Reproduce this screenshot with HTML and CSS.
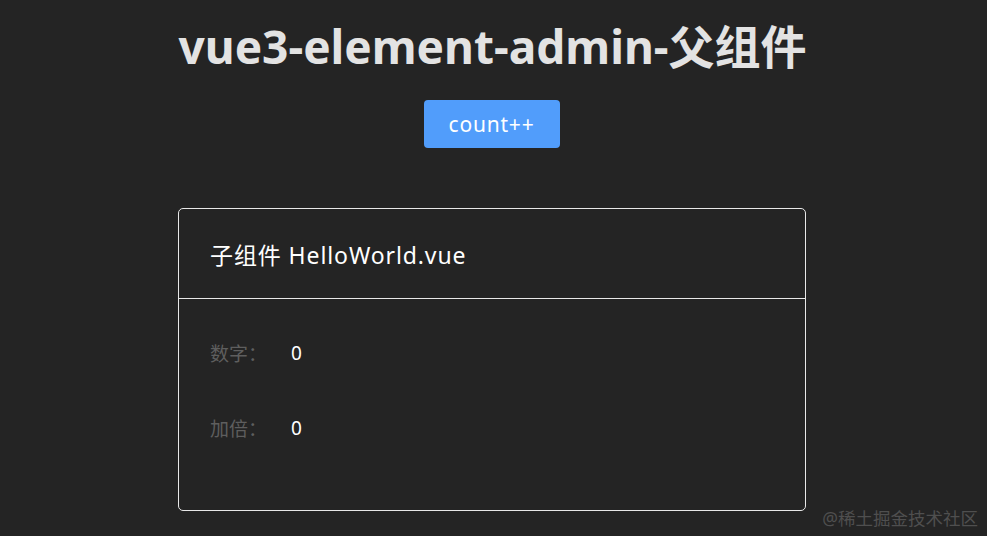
FILE: index.html
```html
<!DOCTYPE html>
<html lang="zh-CN">
<head>
    <meta charset="UTF-8">
    <meta name="viewport" content="width=device-width, initial-scale=1.0">
    <title>vue3-element-admin-父组件</title>
    <link rel="stylesheet" href="styles.css">
</head>
<body>
    <div class="app">
        <h1 class="title">vue3-element-admin-父组件</h1>
        <button class="btn-primary">count++</button>

        <div class="card">
            <div class="card-header">子组件 HelloWorld.vue</div>
            <div class="card-body">
                <div class="form-item">
                    <span class="form-label">数字：</span>
                    <span class="form-value">0</span>
                </div>
                <div class="form-item">
                    <span class="form-label">加倍：</span>
                    <span class="form-value">0</span>
                </div>
            </div>
        </div>
    </div>
    <div class="watermark">@稀土掘金技术社区</div>
</body>
</html>
```

FILE: styles.css
```css
body {
    margin: 0;
    background-color: #242424;
    color: rgba(255, 255, 255, 0.87);
    font-family: "Noto Sans", "Noto Sans CJK SC", sans-serif;
    height: 536px;
    overflow: hidden;
}
.app {
    display: flex;
    flex-direction: column;
    align-items: center;
    padding-top: 14px;
}
.title {
    margin: 0;
    font-size: 46px;
    font-weight: bold;
    line-height: 64px;
    color: #e3e3e3;
    margin-left: -2px;
}
.btn-primary {
    margin-top: 22px;
    margin-left: -4px;
    width: 136px;
    height: 48px;
    border: none;
    border-radius: 4px;
    background-color: #519dfb;
    color: #fff;
    font-family: inherit;
    font-size: 21px;
    letter-spacing: 0.8px;
    cursor: pointer;
}
.card {
    margin-top: 60px;
    width: 626px;
    height: 301px;
    border: 1px solid #e8e8e8;
    border-radius: 5px;
    margin-left: -3px;
}
.card-header {
    height: 90px;
    box-sizing: border-box;
    padding: 0 31px;
    display: flex;
    align-items: center;
    border-bottom: 1px solid #e8e8e8;
    font-size: 23px;
    letter-spacing: 0.9px;
    color: #fff;
}
.card-body {
    padding: 30px 31px;
}
.form-item {
    display: flex;
    align-items: center;
    height: 48px;
    margin-bottom: 27px;
    font-size: 19px;
}
.form-label {
    width: 81px;
    color: #5e5e5e;
}
.form-value {
    color: #fff;
}
.watermark {
    position: absolute;
    right: 9px;
    bottom: 6px;
    font-size: 17.5px;
    color: #4f4f4f;
}
```
